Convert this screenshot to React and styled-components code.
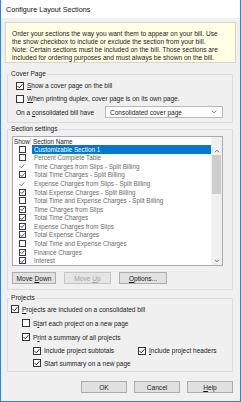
import React from 'react';
import styled, { createGlobalStyle } from 'styled-components';

const GlobalStyle = createGlobalStyle`
    html, body {
        margin: 0;
        padding: 0;
    }
    body {
        font-family: "Liberation Sans", Arial, sans-serif;
        color: #1a1a1a;
    }
`;

const Window = styled.div`
    width: 241px;
    height: 402px;
    box-sizing: border-box;
    border: 1px solid #2c86db;
    border-top: none;
    background: #f0f0f0;
    display: flex;
    flex-direction: column;
`;

const TitleBar = styled.div`
    height: 18px;
    background: #ffffff;
    display: flex;
    align-items: center;
    padding-left: 5px;
    font-size: 7.2px;
    color: #111;
`;

const Body = styled.div`
    flex: 1;
    display: flex;
    flex-direction: column;
    padding: 4px 4px 0 4px;
`;

const InfoBox = styled.div`
    height: 41px;
    box-sizing: border-box;
    background: #ffffe6;
    border: 1px solid #d6d6c2;
    padding: 7px 6px 0 6px;
    font-size: 6.6px;
    line-height: 8.1px;
    white-space: nowrap;
`;

const Group = styled.fieldset`
    margin: ${p => p.$top}px 3px 0 2px;
    padding: ${p => p.$pad};
    border: 1px solid #dcdcdc;
    min-width: 0;
`;

const Legend = styled.legend`
    font-size: 6.6px;
    line-height: 8px;
    padding: 0 1px;
    margin-left: 2px;
`;

const Row = styled.div`
    display: flex;
    align-items: center;
    height: ${p => p.$h || 13}px;
    padding-left: ${p => p.$indent || 0}px;
    font-size: 6.5px;
    white-space: nowrap;
`;

const Box = styled.span`
    width: 8px;
    height: 8px;
    box-sizing: border-box;
    border: 1px solid #333;
    background: #fff;
    display: inline-flex;
    align-items: center;
    justify-content: center;
    margin-right: 3px;
    flex-shrink: 0;
`;

const Pair = styled.div`
    display: flex;
    align-items: center;
    width: ${p => p.$w ? `${p.$w}px` : 'auto'};
`;

const Select = styled.div`
    margin-left: auto;
    margin-right: 9px;
    width: 118px;
    height: 12px;
    box-sizing: border-box;
    border: 1px solid #b8b8b8;
    background: #fff;
    display: flex;
    align-items: center;
    justify-content: space-between;
    padding: 0 5px 0 4px;
    font-size: 6.5px;
`;

const List = styled.div`
    margin: 3px 9px 0 4px;
    height: 130px;
    box-sizing: border-box;
    border: 1px solid #a9abb0;
    background: #fff;
    display: flex;
`;

const ListMain = styled.div`
    flex: 1;
    display: flex;
    flex-direction: column;
`;

const ListRow = styled.div`
    display: flex;
    align-items: center;
    height: ${p => p.$h}px;
    font-size: 6.3px;
    white-space: nowrap;
`;

const ShowCell = styled.div`
    width: 18px;
    height: 100%;
    display: flex;
    align-items: center;
    justify-content: ${p => p.$head ? 'flex-start' : 'center'};
    padding-left: ${p => p.$head ? '1px' : '0'};
    box-sizing: border-box;
    border-right: ${p => p.$head ? '1px solid #e5e5e5' : 'none'};
    color: #222;
`;

const NameCell = styled.div`
    flex: 1;
    height: 100%;
    display: flex;
    align-items: center;
    padding-left: 2px;
    margin-left: ${p => p.$head ? 0 : 1}px;
    background: ${p => p.$selected ? '#0078d7' : 'transparent'};
    color: ${p => p.$selected ? '#fff' : p.$head ? '#222' : '#6a6a6a'};
`;

const ListBox = styled.span`
    width: 7px;
    height: 7px;
    box-sizing: border-box;
    border: 1px solid #3a3a3a;
    background: #fff;
    display: inline-flex;
    align-items: center;
    justify-content: center;
`;

const Scrollbar = styled.div`
    width: 11px;
    background: #f0f0f0;
    display: flex;
    flex-direction: column;
    align-items: center;
    padding-top: 9px;
    box-sizing: border-box;
`;

const Arrow = styled.div`
    height: 9px;
    display: flex;
    align-items: center;
    justify-content: center;
`;

const Thumb = styled.div`
    width: 9px;
    height: 39px;
    background: #cdcdcd;
`;

const Spacer = styled.div`
    flex: 1;
`;

const ButtonRow = styled.div`
    display: flex;
    gap: ${p => p.$gap}px;
    margin: ${p => p.$margin};
    justify-content: ${p => p.$end ? 'flex-end' : 'flex-start'};
`;

const Button = styled.div`
    width: ${p => p.$w}px;
    height: 12px;
    box-sizing: border-box;
    border: 1px solid ${p => p.$disabled ? '#c6c6c6' : '#adadad'};
    background: ${p => p.$disabled ? '#e5e5e5' : '#e1e1e1'};
    color: ${p => p.$disabled ? '#a3a3a3' : '#1a1a1a'};
    display: flex;
    align-items: center;
    justify-content: center;
    font-size: 6.6px;
    white-space: nowrap;
`;

const Check = ({ color = '#222' }) => (
    <svg width="6" height="6" viewBox="0 0 6 6">
        <path d="M0.6 3.1 L2.3 4.8 L5.4 1.2" fill="none" stroke={color} strokeWidth="1" />
    </svg>
);

const CheckBox = ({ checked }) => (
    <Box>{checked && <Check />}</Box>
);

const Chevron = ({ up }) => (
    <svg width="6" height="4" viewBox="0 0 6 4">
        <path d={up ? 'M1 3.2 L3 1.2 L5 3.2' : 'M1 0.8 L3 2.8 L5 0.8'} fill="none" stroke="#606060" strokeWidth="0.9" />
    </svg>
);

const sections = [
    { name: 'Customizable Section 1', state: 'off', selected: true },
    { name: 'Percent Complete Table', state: 'off' },
    { name: 'Time Charges from Slips - Split Billing', state: 'tick' },
    { name: 'Total Time Charges - Split Billing', state: 'on' },
    { name: 'Expense Charges from Slips - Split Billing', state: 'tick' },
    { name: 'Total Expense Charges - Split Billing', state: 'on' },
    { name: 'Total Time and Expense Charges - Split Billing', state: 'off' },
    { name: 'Time Charges from Slips', state: 'on' },
    { name: 'Total Time Charges', state: 'on' },
    { name: 'Expense Charges from Slips', state: 'on' },
    { name: 'Total Expense Charges', state: 'on' },
    { name: 'Total Time and Expense Charges', state: 'off' },
    { name: 'Finance Charges', state: 'on' },
    { name: 'Interest', state: 'on' },
];

const ShowMark = ({ state }) => {
    if (state === 'tick') return <Check color="#7a7a7a" />;
    return <ListBox>{state === 'on' && <Check color="#1d2a5a" />}</ListBox>;
};

export default function App() {
    return (
        <>
            <GlobalStyle />
            <Window>
                <TitleBar>Configure Layout Sections</TitleBar>
                <Body>
                    <InfoBox>
                        Order your sections the way you want them to appear on your bill. Use<br />
                        the show checkbox to include or exclude the section from your bill.<br />
                        Note: Certain sections must be included on the bill. Those sections are<br />
                        included for ordering purposes and must always be shown on the bill.
                    </InfoBox>

                    <Group $top={7} $pad="1px 0 3px 0">
                        <Legend>Cover Page</Legend>
                        <Row $indent={8}>
                            <CheckBox checked />
                            <span><u>S</u>how a cover page on the bill</span>
                        </Row>
                        <Row $indent={8}>
                            <CheckBox />
                            <span><u>W</u>hen printing duplex, cover page is on its own page.</span>
                        </Row>
                        <Row $indent={8} $h={14}>
                            <span>On a <u>c</u>onsolidated bill have</span>
                            <Select>
                                <span>Consolidated cover page</span>
                                <Chevron />
                            </Select>
                        </Row>
                    </Group>

                    <Group $top={2} $pad="0 0 5px 0">
                        <Legend>Section settings</Legend>
                        <List>
                            <ListMain>
                                <ListRow $h={8}>
                                    <ShowCell $head>Show</ShowCell>
                                    <NameCell $head>Section Name</NameCell>
                                </ListRow>
                                {sections.map(s => (
                                    <ListRow key={s.name} $h={8.57}>
                                        <ShowCell><ShowMark state={s.state} /></ShowCell>
                                        <NameCell $selected={s.selected}>{s.name}</NameCell>
                                    </ListRow>
                                ))}
                            </ListMain>
                            <Scrollbar>
                                <Arrow><Chevron up /></Arrow>
                                <Thumb />
                                <Spacer />
                                <Arrow><Chevron /></Arrow>
                            </Scrollbar>
                        </List>
                        <ButtonRow $gap={8} $margin="6px 0 0 4px">
                            <Button $w={44}><span>Move <u>D</u>own</span></Button>
                            <Button $w={47} $disabled><span>Move <u>U</u>p</span></Button>
                            <Button $w={48}><span><u>O</u>ptions...</span></Button>
                        </ButtonRow>
                    </Group>

                    <Group $top={4} $pad="0 0 2px 0">
                        <Legend>Projects</Legend>
                        <Row $indent={3} $h={14}>
                            <CheckBox checked />
                            <span><u>P</u>rojects are included on a consolidated bill</span>
                        </Row>
                        <Row $indent={14} $h={14}>
                            <CheckBox />
                            <span>S<u>t</u>art each project on a new page</span>
                        </Row>
                        <Row $indent={14} $h={14}>
                            <CheckBox checked />
                            <span>P<u>r</u>int a summary of all projects</span>
                        </Row>
                        <Row $indent={25} $h={13}>
                            <Pair $w={105}>
                                <CheckBox checked />
                                <span>Include project subtotals</span>
                            </Pair>
                            <Pair>
                                <CheckBox checked />
                                <span><u>I</u>nclude project headers</span>
                            </Pair>
                        </Row>
                        <Row $indent={25} $h={12}>
                            <CheckBox checked />
                            <span>Start summary on a new page</span>
                        </Row>
                    </Group>

                    <ButtonRow $end $gap={7} $margin="9px 3px 0 0">
                        <Button $w={46}><span>OK</span></Button>
                        <Button $w={46}><span>Cancel</span></Button>
                        <Button $w={46}><span><u>H</u>elp</span></Button>
                    </ButtonRow>
                </Body>
            </Window>
        </>
    );
}
